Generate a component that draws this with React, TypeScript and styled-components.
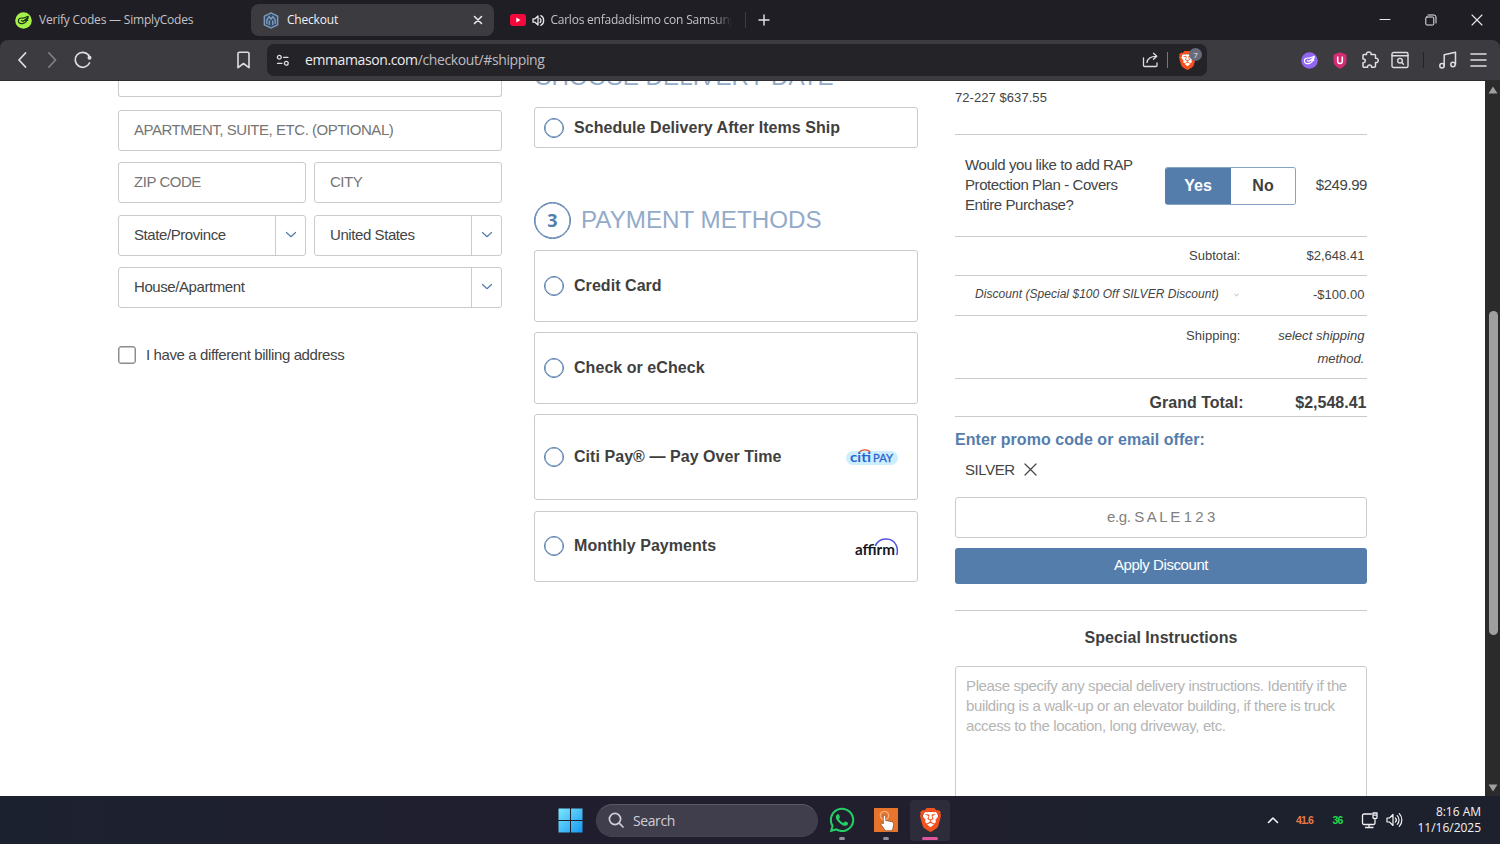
import React from "react";
import styled, { createGlobalStyle } from "styled-components";
import { SiBrave } from "react-icons/si";
import { FaWhatsapp } from "react-icons/fa";

const UI = `"Open Sans", "Noto Sans", sans-serif`;
const SITE = `"Liberation Sans", Arial, sans-serif`;
const BLUE = "#557dab";
const LINE = "#cbcbcb";

const Global = createGlobalStyle`
  * { box-sizing: border-box; }
  body { margin: 0; overflow: hidden; background: #1f1e24; }
  button { font: inherit; letter-spacing: inherit; padding: 0; border: 0; background: none; color: inherit; }
  svg { display: block; flex: none; }
`;

const Desktop = styled.div`
  width: 1500px;
  height: 844px;
  display: flex;
  flex-direction: column;
  overflow: hidden;
`;

/* ---------- browser chrome ---------- */

const TabStrip = styled.header`
  height: 40px;
  flex: none;
  display: flex;
  align-items: center;
  background: #1f1e24;
  font-family: ${UI};
  color: #e8e8ea;
`;

const Tab = styled.div<{ $w: number; $active?: boolean; $pad: number; $gap: number }>`
  width: ${(p) => p.$w}px;
  height: 32px;
  padding: 0 ${(p) => (p.$active ? 10 : 0)}px 0 ${(p) => p.$pad}px;
  display: flex;
  align-items: center;
  gap: ${(p) => p.$gap}px;
  border-radius: 8px;
  background: ${(p) => (p.$active ? "#3c3b40" : "transparent")};
`;

const TabTitle = styled.span<{ $fade?: boolean; $track: number; $bright?: boolean }>`
  flex: 1;
  font-size: 12px;
  line-height: 18px;
  letter-spacing: ${(p) => p.$track}px;
  white-space: nowrap;
  overflow: hidden;
  color: ${(p) => (p.$bright ? "#f0f0f2" : "#c3c2c6")};
  ${(p) => p.$fade && "margin-right: 13px; mask-image: linear-gradient(90deg, #000 90%, transparent 100%);"}
`;

const TabDivider = styled.i`
  width: 1px;
  height: 16px;
  background: #3c3b41;
`;

const NewTab = styled.button`
  width: 36px;
  display: flex;
  justify-content: center;
`;

const WindowButtons = styled.div`
  margin-left: auto;
  display: flex;
  button {
    width: 46px;
    height: 32px;
    display: grid;
    place-items: center;
  }
`;

const Toolbar = styled.div`
  height: 41px;
  flex: none;
  display: flex;
  align-items: center;
  background: #3c3b40;
  border-radius: 8px 8px 0 0;
  border-bottom: 1px solid #2c2b30;
  font-family: ${UI};
  color: #dedee1;
`;

const NavButtons = styled.div`
  width: 267px;
  padding: 0 14px;
  display: flex;
  align-items: center;
`;

const NavButton = styled.button<{ $ml?: string; $dim?: boolean }>`
  margin-left: ${(p) => p.$ml ?? "0"};
  opacity: ${(p) => (p.$dim ? 0.42 : 1)};
`;

const AddressBar = styled.div`
  width: 940px;
  height: 32px;
  border-radius: 7px;
  background: #242328;
  display: flex;
  align-items: center;
  padding: 0 11px 0 9px;
`;

const Url = styled.span`
  margin-left: 15px;
  flex: 1;
  font-size: 14px;
  letter-spacing: -0.39px;
  line-height: 20px;
  color: #bdbcc1;
  b {
    font-weight: 400;
    color: #ececee;
  }
`;

const BarDivider = styled.i<{ $color: string; $h: number; $m: string }>`
  width: 1px;
  height: ${(p) => p.$h}px;
  margin: ${(p) => p.$m};
  background: ${(p) => p.$color};
`;

const Shield = styled.div<{ $w: number; $h: number }>`
  position: relative;
  width: ${(p) => p.$w}px;
  height: ${(p) => p.$h}px;
  > svg {
    width: 100%;
    height: 100%;
  }
`;

const ShieldCount = styled.span`
  position: absolute;
  left: 10px;
  top: -3px;
  width: 13px;
  height: 13px;
  border-radius: 6.5px;
  background: #686c7a;
  color: #e6e7ee;
  font-size: 8px;
  line-height: 13px;
  text-align: center;
`;

const Extensions = styled.div`
  margin-left: auto;
  padding-right: 13px;
  display: flex;
  align-items: center;
`;

/* ---------- page ---------- */

const Viewport = styled.main`
  flex: 1;
  min-height: 0;
  display: flex;
  background: #fff;
`;

const Page = styled.div`
  width: 1485px;
  height: 715px;
  overflow: hidden;
  display: grid;
  grid-template-columns: 384px 384px 412px;
  column-gap: 32px;
  padding-left: 118px;
  align-items: start;
  font-family: ${SITE};
  font-size: 15px;
  letter-spacing: -0.42px;
  color: #444;
`;

const Address = styled.section`
  display: flex;
  flex-direction: column;
  gap: 11.3px;
`;

const CutField = styled.div`
  height: 16px;
  margin-bottom: 1.7px;
  border: 1px solid ${LINE};
  border-top: 0;
  border-radius: 0 0 3px 3px;
`;

const FieldRow = styled.div`
  display: flex;
  gap: 8px;
`;

const Field = styled.div`
  flex: 1;
  height: 41px;
  padding-left: 15px;
  border: 1px solid ${LINE};
  border-radius: 3px;
  line-height: 38px;
  letter-spacing: -0.46px;
  color: #757575;
`;

const Select = styled.div`
  flex: 1;
  height: 41px;
  padding-left: 15px;
  border: 1px solid ${LINE};
  border-radius: 3px;
  display: flex;
  justify-content: space-between;
  line-height: 38px;
`;

const SelectArrow = styled.span`
  width: 30px;
  border-left: 1px solid ${LINE};
  display: grid;
  place-items: center;
`;

const BillingToggle = styled.label`
  margin-top: 26px;
  display: flex;
  align-items: center;
  gap: 10px;
  line-height: 20px;
  letter-spacing: -0.39px;
`;

const CheckBox = styled.span`
  width: 18px;
  height: 18px;
  border: 1px solid #8c8c8c;
  box-shadow: inset 0 0 0 0.5px #8c8c8c;
  border-radius: 3px;
`;

const Methods = styled.section`
  display: flex;
  flex-direction: column;
`;

const Heading = styled.h2`
  margin: 0;
  font-size: 24.2px;
  font-weight: 400;
  line-height: 28px;
  letter-spacing: 0;
  color: #93abc9;
  white-space: nowrap;
`;

const CutHeading = styled(Heading)`
  margin-top: -18px;
  margin-bottom: 16px;
`;

const StepHeading = styled.div`
  margin: 53px 0 10.600px;
  height: 38px;
  display: flex;
  align-items: center;
  gap: 10px;
`;

const StepNumber = styled.span`
  width: 37px;
  height: 37px;
  border: 1px solid ${BLUE};
  box-shadow: inset 0 0 0 0.6px ${BLUE};
  border-radius: 50%;
  font: 700 18px/34px ${UI};
  text-align: center;
  letter-spacing: 0;
  color: ${BLUE};
`;

const Option = styled.div<{ $h: number; $mb?: number }>`
  height: ${(p) => p.$h}px;
  margin-bottom: ${(p) => p.$mb ?? 0}px;
  padding: 0 18px 0 9px;
  border: 1px solid ${LINE};
  border-radius: 3px;
  display: flex;
  align-items: center;
  font-size: 16px;
  font-weight: 700;
  letter-spacing: 0.05px;
  color: #3f3f3f;
`;

const Radio = styled.span`
  width: 20px;
  height: 20px;
  margin-right: 10px;
  border: 1px solid ${BLUE};
  box-shadow: inset 0 0 0 0.5px ${BLUE};
  border-radius: 50%;
`;

const OptionLogo = styled.span`
  margin-left: auto;
`;

const Summary = styled.aside`
  margin-left: 5px;
  width: 412px;
  display: flex;
  flex-direction: column;
`;

const Sku = styled.div`
  height: 54px;
  padding-top: 9px;
  border-bottom: 1px solid ${LINE};
  font-size: 13px;
  line-height: 16px;
  letter-spacing: 0.06px;
`;

const Protection = styled.div`
  height: 102px;
  border-bottom: 1px solid ${LINE};
  display: flex;
  align-items: center;
  padding-left: 10px;
`;

const Question = styled.p`
  margin: 0 0 2px;
  width: 200px;
  line-height: 20px;
  white-space: pre-line;
`;

const YesNo = styled.div`
  width: 131px;
  height: 38px;
  border: 1px solid #86a3c6;
  border-left: 0;
  border-radius: 3px;
  display: grid;
  grid-template-columns: 66px 1fr;
  overflow: hidden;
`;

const YesNoButton = styled.button<{ $on?: boolean }>`
  margin: ${(p) => (p.$on ? "-1px 0" : "0")};
  font-size: 16px;
  font-weight: 700;
  letter-spacing: 0;
  background: ${(p) => (p.$on ? BLUE : "#fff")};
  color: ${(p) => (p.$on ? "#fff" : "#3f3f3f")};
`;

const Price = styled.span`
  margin-left: auto;
  padding-bottom: 2px;
`;

const TotalRow = styled.div<{ $h: number; $top?: number }>`
  height: ${(p) => p.$h}px;
  border-bottom: 1px solid ${LINE};
  padding: ${(p) => p.$top ?? 8}px 2.5px 0 0;
  display: grid;
  grid-template-columns: 285.500px 1fr;
  text-align: right;
  font-size: 13px;
  line-height: 23px;
  letter-spacing: 0.02px;
`;

const DiscountLabel = styled.span`
  display: flex;
  align-items: center;
  justify-content: space-between;
  height: 23px;
  padding: 0 2px 0 20px;
  font-size: 12px;
  letter-spacing: 0.04px;
  font-style: italic;
`;

const GrandTotal = styled.div`
  height: 38px;
  padding: 13px 0.5px 0 0;
  border-bottom: 1px solid ${LINE};
  display: grid;
  grid-template-columns: 288.500px 1fr;
  text-align: right;
  font-size: 16px;
  font-weight: 700;
  line-height: 22px;
  letter-spacing: 0;
  color: #3f3f3f;
`;

const PromoTitle = styled.h3`
  margin: 12px 0 0;
  font-size: 16px;
  line-height: 22px;
  letter-spacing: 0.06px;
  color: ${BLUE};
`;

const PromoCode = styled.div`
  margin: 8px 0 18px;
  padding-left: 10px;
  height: 20px;
  display: flex;
  align-items: center;
  gap: 9.500px;
`;

const PromoInput = styled.div`
  height: 41px;
  border: 1px solid ${LINE};
  border-radius: 3px;
  line-height: 37px;
  text-align: center;
  color: #808080;
`;

const ApplyButton = styled.button`
  margin: 10px 0 26px;
  height: 36px;
  padding-bottom: 3px;
  border-radius: 3px;
  background: ${BLUE};
  color: #fff;
`;

const Special = styled.div`
  border-top: 1px solid ${LINE};
`;

const SpecialTitle = styled.h3`
  margin: 16px 0 17px;
  font-size: 16px;
  line-height: 22px;
  letter-spacing: 0.04px;
  text-align: center;
  color: #3f3f3f;
`;

const Notes = styled.div`
  height: 150px;
  padding: 9px 10px;
  border: 1px solid ${LINE};
  border-radius: 3px;
  line-height: 20.2px;
  letter-spacing: -0.375px;
  color: #b5b5b5;
  white-space: pre-line;
`;

const ScrollTrack = styled.div`
  width: 15px;
  display: flex;
  flex-direction: column;
  align-items: center;
  background: #2b2b2b;
  padding: 5px 0 4px 1px;
`;

const ScrollThumb = styled.i`
  width: 9px;
  height: 324px;
  margin-top: 217px;
  margin-bottom: auto;
  border-radius: 5px;
  background: #9f9f9f;
`;

/* ---------- taskbar ---------- */

const Taskbar = styled.footer`
  height: 48px;
  flex: none;
  display: flex;
  align-items: center;
  padding-left: 558px;
  background: linear-gradient(90deg, #1c2130, #211e2e 45%, #211e2e 60%, #1d212d 75%);
  font-family: ${UI};
  color: #f2f2f4;
`;

const SearchBox = styled.div`
  margin-left: 13px;
  width: 222px;
  height: 33px;
  border-radius: 17px;
  border: 1px solid #454352;
  border-top-color: #5a5867;
  background: #403e4c;
  display: flex;
  align-items: center;
  gap: 9px;
  padding-left: 11px;
  font-size: 14px;
  letter-spacing: -0.4px;
  color: #cfced6;
`;

const TaskApp = styled.div<{ $active?: boolean; $ml: number }>`
  width: 40px;
  height: 41px;
  margin-left: ${(p) => p.$ml}px;
  border-radius: 4px;
  background: ${(p) => (p.$active ? "#2d2c3a" : "transparent")};
  display: flex;
  flex-direction: column;
  align-items: center;
  justify-content: flex-end;
`;

const AppMark = styled.i<{ $active?: boolean; $gap?: number }>`
  width: ${(p) => (p.$active ? 16 : 6)}px;
  height: 3px;
  margin-top: ${(p) => p.$gap ?? 4}px;
  margin-bottom: 1px;
  border-radius: 2px;
  background: ${(p) => (p.$active ? "#e0569b" : "#918f9a")};
`;

const Tray = styled.div`
  margin-left: auto;
  display: flex;
  align-items: center;
  padding-right: 19px;
`;

const Meter = styled.span<{ $color: string; $w: number; $ml: number }>`
  width: ${(p) => p.$w}px;
  margin-left: ${(p) => p.$ml}px;
  font: 700 10.5px/12px ${SITE};
  letter-spacing: -0.8px;
  text-align: center;
  color: ${(p) => p.$color};
`;

const Clock = styled.div`
  margin-left: 15px;
  font-size: 12px;
  line-height: 16px;
  letter-spacing: -0.02px;
  text-align: right;
`;

/* ---------- drawings ---------- */

const Stroke = ({ w, h, sw = 1.5, children }: { w: number; h: number; sw?: number; children: React.ReactNode }) => (
  <svg width={w} height={h} viewBox={`0 0 ${w} ${h}`} fill="none" stroke="currentColor" strokeWidth={sw} strokeLinecap="round" strokeLinejoin="round">
    {children}
  </svg>
);

const CodesMark = ({ bg, fg }: { bg: string; fg: string }) => (
  <svg width="17" height="17" viewBox="0 0 17 17" fill="none" stroke={fg} strokeWidth="1.2" strokeLinecap="round" strokeLinejoin="round">
    <circle cx="8.5" cy="8.5" r="8.3" fill={bg} stroke="none" />
    <path d="M8 6.200C5.200 5.500 3.200 7 3.400 9.200c.2 2.200 2.800 2.900 5 2.200 2.300-.7 3.600-2.700 4.900-6.200L7.800 9.400 6.400 8.400M8 6.200l5.300-1.900M9.500 8.100l3.300.2" />
  </svg>
);

const StoreMark = () => (
  <svg width="16" height="17" viewBox="0 0 16 17" fill="none" stroke="#7f9fc4" strokeWidth="1.3">
    <path d="M8 .9l6.700 3.300v8.600L8 16.100l-6.700-3.300V4.200z" fill="#3a4d66" />
    <path d="M3.800 12V8L6.200 4.600 8 7.200l1.800-2.600L12.200 8v4M6.300 13V8.500M9.700 13V8.500" />
  </svg>
);

const Speaker = () => (
  <Stroke w={13} h={13} sw={1.3}>
    <path d="M1 4.800h2L6 2v9L3 8.200H1z" />
    <path d="M8 4.500c1.300 1 1.300 3 0 4M8.800 1.700c3.800 1.500 3.800 8 0 9.600" />
  </Stroke>
);

const ArrowDown = () => (
  <Stroke w={12} h={8} sw={1.2}>
    <path d="M1.500 1.500L6 5.700l4.500-4.200" stroke={BLUE} />
  </Stroke>
);

const BraveLion = ({ w, h, children }: { w: number; h: number; children?: React.ReactNode }) => (
  <Shield $w={w} $h={h}>
    <svg viewBox="1.800 0 20.400 24" preserveAspectRatio="none">
      <path d="M6 4h12l1.500 4-3 9.500L12 20.500l-4.500-3L4.500 8z" fill="#fff" />
      <SiBrave size={24} color="#f4511e" />
    </svg>
    {children}
  </Shield>
);

const WindowsLogo = () => (
  <svg width="25" height="25" viewBox="0 0 25 25">
    <defs>
      <linearGradient id="win" x1="0" y1="0" x2="1" y2="1" gradientUnits="objectBoundingBox">
        <stop offset="0" stopColor="#7be8fb" />
        <stop offset="1" stopColor="#1697f2" />
      </linearGradient>
    </defs>
    <path d="M.5.500h11.500v11.500H.5zM13 .5h11.500v11.500H13zM.5 13h11.500v11.500H.5zM13 13h11.500v11.500H13z" fill="url(#win)" />
  </svg>
);

const TouchApp = () => (
  <svg width="24" height="24" viewBox="0 0 24 24">
    <rect width="24" height="24" fill="#e8742c" />
    <circle cx="10.500" cy="7.500" r="4.200" fill="none" stroke="#f6b184" strokeWidth="1.200" />
    <path d="M9.300 8.500c0-1.500 2.400-1.500 2.400 0v4l6 1.200c1.500.4 2 1.200 1.900 2.600l-.7 4.200-1.200 2.200h-6.200L7.300 17c-1-1.400.3-2.500 1.400-1.600l.6.600z" fill="#fff" stroke="#5b3b2a" strokeWidth=".6" />
  </svg>
);

const CitiLogo = () => (
  <svg width="52" height="17" viewBox="0 0 52 17">
    <rect x="0" y="2" width="52" height="14" rx="7" fill="#cdeefc" />
    <text x="4" y="13" fontFamily="Lato" fontWeight="700" fontSize="14" letterSpacing="0" textLength="21" lengthAdjust="spacingAndGlyphs" fill="#2a63cf">citi</text>
    <text x="27" y="13" fontFamily="Lato" fontWeight="400" fontSize="11" letterSpacing="0" textLength="20" lengthAdjust="spacingAndGlyphs" fill="#2a63cf" stroke="#2a63cf" strokeWidth=".3">PAY</text>
    <path d="M13.500 2.800c2.800-2.500 8-2.500 10.800 0" fill="none" stroke="#e0513f" strokeWidth="1.300" />
  </svg>
);

const AffirmLogo = () => (
  <svg width="44" height="19" viewBox="0 0 44 19">
    <text x="0" y="17" fontFamily="Lato" fontWeight="700" fontSize="15" letterSpacing="0" textLength="40" lengthAdjust="spacingAndGlyphs" fill="#17171f">affirm</text>
    <path d="M20.300 8C24-.6 37-1.600 41.300 7.500c1.300 3 1.600 6 .4 9.500" fill="none" stroke="#5450e6" strokeWidth="1.500" />
  </svg>
);

const MonthlyLogo = styled(OptionLogo)`
  padding-top: 2px;
`;

const CitiSlot = styled(OptionLogo)`
  padding: 1px 1.500px 0 0;
`;

const ExtIcon = styled.span<{ $ml: number }>`
  margin-left: ${(p) => p.$ml}px;
`;

const TinyArrow = () => (
  <svg width="5" height="4" viewBox="0 0 5 4" fill="none" stroke="#999" strokeWidth=".8">
    <path d="M.5 1l2 1.800 2-1.800" />
  </svg>
);

/* ---------- screen ---------- */

export default function App() {
  return (
    <Desktop>
      <Global />
      <TabStrip>
        <Tab $w={251} $pad={15} $gap={7}>
          <CodesMark bg="#a5f04b" fg="#1d3314" />
          <TabTitle $track={-0.2}>Verify Codes — SimplyCodes</TabTitle>
        </Tab>
        <Tab $w={243} $active $pad={12} $gap={8}>
          <StoreMark />
          <TabTitle $track={-0.2} $bright>Checkout</TabTitle>
          <Stroke w={12} h={12} sw={1.6}><path d="M2.500 2.500l7 7M9.500 2.500l-7 7" /></Stroke>
        </Tab>
        <Tab $w={251} $pad={16} $gap={5.7}>
          <svg width="16" height="12" viewBox="0 0 16 12">
            <rect width="16" height="12" rx="3" fill="#f5093a" />
            <path d="M6.300 3.500v5L10.500 6z" fill="#fff" />
          </svg>
          <Speaker />
          <TabTitle $track={-0.22} $fade>Carlos enfadadisimo con Samsung</TabTitle>
        </Tab>
        <TabDivider />
        <NewTab>
          <Stroke w={12} h={12} sw={1.4}><path d="M6 1v10M1 6h10" /></Stroke>
        </NewTab>
        <WindowButtons>
          <button><Stroke w={12} h={12} sw={1}><path d="M1 5.500h10" /></Stroke></button>
          <button>
            <Stroke w={12} h={12} sw={1}>
              <rect x=".8" y="3" width="8" height="8" rx="1" />
              <path d="M3 1h6a2 2 0 0 1 2 2v6" />
            </Stroke>
          </button>
          <button><Stroke w={12} h={12} sw={1.1}><path d="M1 1l10 10M11 1L1 11" /></Stroke></button>
        </WindowButtons>
      </TabStrip>

      <Toolbar>
        <NavButtons>
          <NavButton><Stroke w={16} h={18} sw={1.8}><path d="M11.500 2L5 9l6.500 7" /></Stroke></NavButton>
          <NavButton $ml="14px" $dim><Stroke w={16} h={18} sw={1.8}><path d="M5 2l6.500 7L5 16" /></Stroke></NavButton>
          <NavButton $ml="13px">
            <Stroke w={20} h={18} sw={1.7}>
              <path d="M15.500 4A7.500 7.500 0 1 0 16.500 12" />
              <circle cx="16.500" cy="6.700" r="2" fill="currentColor" stroke="none" />
              <path d="M15.500 4l1 2" />
            </Stroke>
          </NavButton>
          <NavButton $ml="auto"><Stroke w={18} h={18} sw={1.6}><path d="M4.500 1.200h8a1.500 1.500 0 0 1 1.500 1.500v14l-5.500-4.200-5.500 4.200v-14A1.500 1.500 0 0 1 4.500 1.200z" /></Stroke></NavButton>
        </NavButtons>
        <AddressBar>
          <Stroke w={14} h={14} sw={1.3}>
            <circle cx="3.300" cy="4.300" r="1.900" /><path d="M7.500 4.300h4.500" />
            <circle cx="10.300" cy="10.300" r="1.900" /><path d="M1.500 10.300H6" />
          </Stroke>
          <Url><b>emmamason.com</b>/checkout/#shipping</Url>
          <Stroke w={17} h={16} sw={1.3}>
            <path d="M1.500 6v7.500a1 1 0 0 0 1 1h11.500a1 1 0 0 0 1-1V11M5 10.500C5.500 6 9 4.300 14.500 4.300M11.500 1.200l3.300 3.100-3.300 3" />
          </Stroke>
          <BarDivider $color="#77767c" $h={16} $m="0 11px 0 8px" />
          <BraveLion w={17} h={19}><ShieldCount>7</ShieldCount></BraveLion>
        </AddressBar>
        <Extensions>
          <CodesMark bg="#9166f2" fg="#fff" />
          <ExtIcon $ml={15}>
            <svg width="14" height="17" viewBox="0 0 14 17">
              <path d="M7 .3l6.500 2.200v7c0 3.500-3.500 5.700-6.500 7.300C4 15.200.5 13 .5 9.500v-7z" fill="#d42c72" />
              <path d="M4.700 4.500v4.700a2.300 2.300 0 0 0 4.600 0V4.500" fill="none" stroke="#fff" strokeWidth="1.500" />
            </svg>
          </ExtIcon>
          <ExtIcon $ml={14}>
            <Stroke w={18} h={18} sw={1.5}>
              <path d="M2 4.500a1 1 0 0 1 1-1h2.600C5 1.500 6.500.900 7.800.900s2.700.9 2.200 2.600h3.500a1 1 0 0 1 1 1V7.300c1.800-.4 2.700.8 2.700 2.100s-1 2.500-2.700 2V15a1.300 1.300 0 0 1-1.300 1.300H10.600c.2-1.800-.9-2.400-2-2.400s-2.300.7-2 2.400H3.200A1.200 1.200 0 0 1 2 15v-3.300c1.500.1 2.300-.8 2.300-1.900S3.500 7.800 2 7.900z" />
            </Stroke>
          </ExtIcon>
          <ExtIcon $ml={12}>
            <Stroke w={18} h={18} sw={1.4}>
              <rect x="1" y="1.500" width="16" height="15" rx="1.500" />
              <path d="M1 4.700h16" />
              <circle cx="9" cy="9.700" r="2.300" /><path d="M10.800 11.500l1.700 1.700" />
            </Stroke>
          </ExtIcon>
          <BarDivider $color="#242328" $h={16} $m="0 15px 0 14px" />
          <Stroke w={18} h={18} sw={1.5}>
            <circle cx="3" cy="14.800" r="2.200" /><circle cx="14" cy="13.500" r="2.200" />
            <path d="M5.200 14.500V3.700L16.500 1.300v12" />
          </Stroke>
          <ExtIcon $ml={13}>
            <Stroke w={17} h={16} sw={1.6}><path d="M1 2h15M1 8h15M1 14h15" /></Stroke>
          </ExtIcon>
        </Extensions>
      </Toolbar>

      <Viewport>
        <Page>
          <Address>
            <CutField />
            <FieldRow><Field>APARTMENT, SUITE, ETC. (OPTIONAL)</Field></FieldRow>
            <FieldRow><Field>ZIP CODE</Field><Field>CITY</Field></FieldRow>
            <FieldRow>
              <Select>State/Province<SelectArrow><ArrowDown /></SelectArrow></Select>
              <Select>United States<SelectArrow><ArrowDown /></SelectArrow></Select>
            </FieldRow>
            <FieldRow><Select>House/Apartment<SelectArrow><ArrowDown /></SelectArrow></Select></FieldRow>
            <BillingToggle><CheckBox />I have a different billing address</BillingToggle>
          </Address>

          <Methods>
            <CutHeading>CHOOSE DELIVERY DATE</CutHeading>
            <Option $h={41}><Radio />Schedule Delivery After Items Ship</Option>
            <StepHeading>
              <StepNumber>3</StepNumber>
              <Heading>PAYMENT METHODS</Heading>
            </StepHeading>
            <Option $h={72.4} $mb={10}><Radio />Credit Card</Option>
            <Option $h={72.4} $mb={9.6}><Radio />Check or eCheck</Option>
            <Option $h={86} $mb={10.600}><Radio />Citi Pay® — Pay Over Time<CitiSlot><CitiLogo /></CitiSlot></Option>
            <Option $h={71}><Radio />Monthly Payments<MonthlyLogo><AffirmLogo /></MonthlyLogo></Option>
          </Methods>

          <Summary>
            <Sku>72-227 $637.55</Sku>
            <Protection>
              <Question>{"Would you like to add RAP\nProtection Plan - Covers\nEntire Purchase?"}</Question>
              <YesNo><YesNoButton $on>Yes</YesNoButton><YesNoButton>No</YesNoButton></YesNo>
              <Price>$249.99</Price>
            </Protection>
            <TotalRow $h={39} $top={7}><span>Subtotal:</span><span>$2,648.41</span></TotalRow>
            <TotalRow $h={40} $top={7.4}>
              <DiscountLabel>Discount (Special $100 Off SILVER Discount)<TinyArrow /></DiscountLabel>
              <span>-$100.00</span>
            </TotalRow>
            <TotalRow $h={63}><span>Shipping:</span><em>select shipping<br />method.</em></TotalRow>
            <GrandTotal><span>Grand Total:</span><span>$2,548.41</span></GrandTotal>
            <PromoTitle>Enter promo code or email offer:</PromoTitle>
            <PromoCode>
              SILVER
              <Stroke w={13} h={13} sw={1.2}><path d="M1 1l11 11M12 1L1 12" /></Stroke>
            </PromoCode>
            <PromoInput>e.g. S A L E 1 2 3</PromoInput>
            <ApplyButton>Apply Discount</ApplyButton>
            <Special>
              <SpecialTitle>Special Instructions</SpecialTitle>
              <Notes>{"Please specify any special delivery instructions. Identify if the\nbuilding is a walk-up or an elevator building, if there is truck\naccess to the location, long driveway, etc."}</Notes>
            </Special>
          </Summary>
        </Page>
        <ScrollTrack>
          <svg width="10" height="8" viewBox="0 0 10 8"><path d="M5 .5L9.500 7.500H.5z" fill="#9f9f9f" /></svg>
          <ScrollThumb />
          <svg width="10" height="8" viewBox="0 0 10 8"><path d="M5 7.500L9.500.500H.5z" fill="#9f9f9f" /></svg>
        </ScrollTrack>
      </Viewport>

      <Taskbar>
        <WindowsLogo />
        <SearchBox>
          <Stroke w={16} h={16} sw={1.7}><circle cx="7" cy="7" r="5.600" /><path d="M11.200 11.200L15 15" /></Stroke>
          Search
        </SearchBox>
        <TaskApp $ml={4}><FaWhatsapp size={28} color="#25cf66" /><AppMark $gap={3} /></TaskApp>
        <TaskApp $ml={4}><TouchApp /><AppMark $gap={5} /></TaskApp>
        <TaskApp $ml={4} $active><BraveLion w={21} h={24} /><AppMark $active $gap={5} /></TaskApp>
        <Tray>
          <Stroke w={12} h={8} sw={1.6}><path d="M1.500 6.500L6 2l4.500 4.500" /></Stroke>
          <Meter $color="#e87a44" $w={20} $ml={16}>41.6</Meter>
          <Meter $color="#22d94e" $w={14} $ml={16}>36</Meter>
          <ExtIcon $ml={16}>
            <Stroke w={18} h={17} sw={1.3}>
              <path d="M10.500 2H3a1.500 1.500 0 0 0-1.500 1.500V11A1.500 1.500 0 0 0 3 12.500h9.500a1.500 1.500 0 0 0 1.500-1.500V8M8 12.500v3M4.500 15.500h7.500M12 1h4v4.500a1 1 0 0 1-1 1h-2a1 1 0 0 1-1-1zM12 3.200h4" />
            </Stroke>
          </ExtIcon>
          <ExtIcon $ml={7}>
            <Stroke w={17} h={16} sw={1.2}>
              <path d="M1 6h2.500L7 2.500v11L3.500 10H1z" />
              <path d="M9.300 5.800c1.200 1.200 1.200 3.200 0 4.400M11.300 3.700c2.300 2.400 2.300 6.200 0 8.600M13.300 1.700c3.400 3.500 3.400 9.100 0 12.600" />
            </Stroke>
          </ExtIcon>
          <Clock>8:16 AM<br />11/16/2025</Clock>
        </Tray>
      </Taskbar>
    </Desktop>
  );
}
